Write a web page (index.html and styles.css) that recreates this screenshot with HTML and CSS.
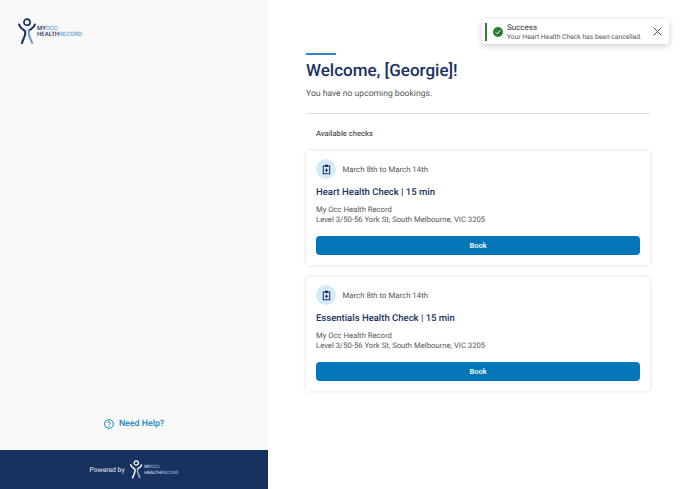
FILE: index.html
```html
<!DOCTYPE html>
<html lang="en">
<head>
    <meta charset="UTF-8">
    <meta name="viewport" content="width=device-width, initial-scale=1.0">
    <title>My Occ Health Record</title>
    <link rel="stylesheet" href="styles.css">
</head>
<body>

    <!-- Left panel -->
    <aside class="sidebar">
        <div class="sidebar-top">
            <div class="logo">
                <svg class="logo-figure" viewBox="2 0 19 28" width="18" height="26">
                    <circle cx="11.5" cy="4.500" r="3.300" fill="none" stroke="#1a3263" stroke-width="1.800"/>
                    <path d="M3 7 C4 11 7 12 9.500 14 L9.500 18 L6 27" fill="none" stroke="#1a3263" stroke-width="2.200" stroke-linecap="round"/>
                    <path d="M20 7 C19 10 16 12 13.500 13.500" fill="none" stroke="#1a3263" stroke-width="2.200" stroke-linecap="round"/>
                    <path d="M13.500 14 L13.500 18 L17 27" fill="none" stroke="#6d9fd0" stroke-width="2.200" stroke-linecap="round"/>
                </svg>
                <div class="logo-text">
                    <span>MY<em>OCC</em></span>
                    <span>HEALTH<em>RECORD</em></span>
                </div>
            </div>
        </div>
        <div class="help">
            <svg viewBox="0 0 24 24" width="10" height="10">
                <circle cx="12" cy="12" r="10.5" fill="none" stroke="#1a85c2" stroke-width="2.400"/>
                <path d="M8.800 9.500a3.200 3.200 0 1 1 4.800 2.800c-1 .6-1.600 1.200-1.600 2.400" fill="none" stroke="#1a85c2" stroke-width="2.400"/>
                <circle cx="12" cy="17.800" r="1.500" fill="#1a85c2"/>
            </svg>
            <span>Need Help?</span>
        </div>
        <footer class="powered">
            <span class="powered-label">Powered by</span>
            <div class="logo logo-small">
                <svg class="logo-figure" viewBox="2 0 19 28" width="12.500" height="18.500">
                    <circle cx="11.5" cy="4.500" r="3.300" fill="none" stroke="#ffffff" stroke-width="1.800"/>
                    <path d="M3 7 C4 11 7 12 9.500 14 L9.500 18 L6 27" fill="none" stroke="#ffffff" stroke-width="2.200" stroke-linecap="round"/>
                    <path d="M20 7 C19 10 16 12 13.500 13.500" fill="none" stroke="#ffffff" stroke-width="2.200" stroke-linecap="round"/>
                    <path d="M13.500 14 L13.500 18 L17 27" fill="none" stroke="#8db6dd" stroke-width="2.200" stroke-linecap="round"/>
                </svg>
                <div class="logo-text">
                    <span>MY<em>OCC</em></span>
                    <span>HEALTH<em>RECORD</em></span>
                </div>
            </div>
        </footer>
    </aside>

    <!-- Main content -->
    <main class="content">
        <div class="accent"></div>
        <h1>Welcome, [Georgie]!</h1>
        <p class="lead">You have no upcoming bookings.</p>
        <hr class="divider">
        <h2>Available checks</h2>

        <section class="card">
            <div class="card-date">
                <span class="card-icon">
                    <svg viewBox="0 0 24 24" width="11" height="11">
                        <path d="M5 4.500h14v17H5z" fill="none" stroke="#1a3263" stroke-width="2.200"/>
                        <rect x="8.500" y="1.500" width="7" height="5" fill="#1a3263"/>
                        <path d="M12 10v7.500M8.200 13.700h7.600" stroke="#1a3263" stroke-width="2.400"/>
                    </svg>
                </span>
                <span>March 8th to March 14th</span>
            </div>
            <h3>Heart Health Check | 15 min</h3>
            <p class="address">My Occ Health Record<br>Level 3/50-56 York St, South Melbourne, VIC 3205</p>
            <button class="book">Book</button>
        </section>

        <section class="card">
            <div class="card-date">
                <span class="card-icon">
                    <svg viewBox="0 0 24 24" width="11" height="11">
                        <path d="M5 4.500h14v17H5z" fill="none" stroke="#1a3263" stroke-width="2.200"/>
                        <rect x="8.500" y="1.500" width="7" height="5" fill="#1a3263"/>
                        <path d="M12 10v7.500M8.200 13.700h7.600" stroke="#1a3263" stroke-width="2.400"/>
                    </svg>
                </span>
                <span>March 8th to March 14th</span>
            </div>
            <h3>Essentials Health Check | 15 min</h3>
            <p class="address">My Occ Health Record<br>Level 3/50-56 York St, South Melbourne, VIC 3205</p>
            <button class="book">Book</button>
        </section>
    </main>

    <!-- Toast -->
    <div class="toast">
        <span class="toast-bar"></span>
        <svg class="toast-check" viewBox="0 0 20 20" width="10" height="10">
            <circle cx="10" cy="10" r="10" fill="#2e7d32"/>
            <path d="M5.500 10.500l3 3 6-6.500" fill="none" stroke="#ffffff" stroke-width="2"/>
        </svg>
        <div class="toast-text">
            <strong>Success</strong>
            <span>Your Heart Health Check has been cancelled.</span>
        </div>
        <svg class="toast-close" viewBox="0 0 14 14" width="9" height="9">
            <path d="M1 1l12 12M13 1L1 13" stroke="#444" stroke-width="1.500"/>
        </svg>
    </div>

</body>
</html>
```

FILE: styles.css
```css
* {
    box-sizing: border-box;
}
body {
    font-family: 'Roboto', sans-serif;
    background-color: #ffffff;
    color: #555555;
    margin: 0;
    height: 489px;
    overflow: hidden;
    display: flex;
    text-rendering: geometricPrecision;
}
.sidebar {
    width: 268px;
    height: 489px;
    flex-shrink: 0;
    background-color: #f9f9f9;
    display: flex;
    flex-direction: column;
}
.sidebar-top {
    flex: 1;
    padding: 18px 0 0 18px;
}
.logo {
    display: flex;
    align-items: center;
    gap: 1px;
}
.logo-text {
    display: flex;
    flex-direction: column;
    font-size: 6px;
    font-weight: 500;
    line-height: 6.500px;
    margin-top: 2px;
    color: #1a3263;
}
.logo-text em {
    font-style: normal;
    color: #6d9fd0;
}
.help {
    display: flex;
    align-items: center;
    justify-content: center;
    gap: 5px;
    height: 12px;
    margin-bottom: 20px;
    color: #1a85c2;
    font-size: 8.800px;
    font-weight: 500;
}
.powered {
    height: 39px;
    background-color: #18325f;
    display: flex;
    align-items: center;
    justify-content: center;
    gap: 5px;
    color: #e6ebf2;
    font-size: 6.800px;
}
.logo-small {
    gap: 2px;
}
.logo-small .logo-text {
    font-size: 4.600px;
    line-height: 6px;
    color: #c6d3e4;
}
.logo-small .logo-text em {
    color: #7fa6cf;
}
.content {
    flex: 1;
    padding: 53px 38px 0;
}
.accent {
    width: 30px;
    height: 2px;
    background-color: #2a86c4;
}
h1 {
    font-size: 17px;
    font-weight: 500;
    color: #1a3263;
    margin: 6px 0 0;
    line-height: 20px;
}
.lead {
    font-size: 8.600px;
    margin: 7px 0 0;
    line-height: 12px;
}
.divider {
    border: none;
    border-top: 1px solid #dddddd;
    margin: 13px 0 0;
}
h2 {
    font-size: 7.600px;
    font-weight: 500;
    margin: 14px 0 0 10px;
    line-height: 11px;
}
.card {
    background-color: #ffffff;
    border-radius: 4px;
    box-shadow: 0 0 4px rgba(0, 0, 0, 0.13);
    height: 114px;
    margin-top: 12px;
    padding: 8px 10px;
}
.card-date {
    display: flex;
    align-items: center;
    gap: 6.500px;
    font-size: 7.800px;
}
.card-icon {
    width: 20px;
    height: 20px;
    border-radius: 50%;
    background-color: #d4ebfa;
    display: flex;
    align-items: center;
    justify-content: center;
}
h3 {
    font-size: 9.500px;
    font-weight: 500;
    color: #1a3263;
    margin: 7px 0 0;
    line-height: 14px;
}
.address {
    font-size: 7.700px;
    line-height: 9.500px;
    margin: 5px 0 0;
}
.book {
    display: block;
    width: 100%;
    height: 19px;
    margin-top: 12px;
    border: none;
    border-radius: 4px;
    background-color: #0477b8;
    color: #ffffff;
    font-family: inherit;
    font-size: 7.500px;
    font-weight: 500;
}
.toast {
    position: absolute;
    left: 482px;
    top: 19px;
    width: 187px;
    height: 25px;
    background-color: #ffffff;
    border-radius: 3px;
    box-shadow: 0 2px 6px rgba(0, 0, 0, 0.2);
    display: flex;
    align-items: center;
}
.toast-bar {
    width: 2px;
    height: 18px;
    margin-left: 3px;
    background-color: #2e7d32;
}
.toast-check {
    margin-left: 6px;
}
.toast-text {
    display: flex;
    flex-direction: column;
    gap: 1px;
    margin-left: 4px;
    padding-top: 2px;
    font-size: 6.750px;
    line-height: 8.500px;
    white-space: nowrap;
}
.toast-text strong {
    font-size: 8px;
    font-weight: 400;
    color: #333333;
}
.toast-close {
    margin-left: auto;
    margin-right: 7px;
}
```
